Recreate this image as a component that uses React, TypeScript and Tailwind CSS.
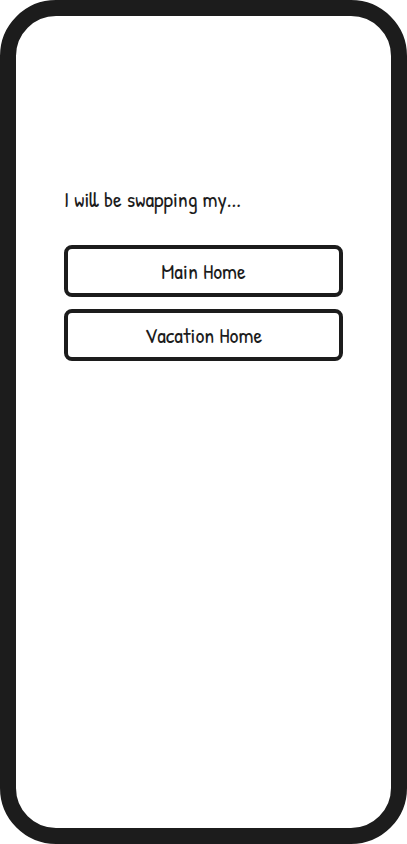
const homeTypes = ["Main Home", "Vacation Home"];

export default function App() {
  return (
    <div className="min-h-screen bg-white flex">
      <main className="flex-1 rounded-[56px] border-16 border-[#1c1c1c] bg-white px-12 pt-[167px] pb-12 text-[22px] leading-8 text-[#1c1c1c] font-['Patrick_Hand','Lato',sans-serif]">
        <h1 id="home-type">I will be swapping my...</h1>
        <div role="group" aria-labelledby="home-type" className="mt-[30px] flex flex-col gap-3">
          {homeTypes.map((label) => (
            <button
              key={label}
              type="button"
              className="h-13 w-full cursor-pointer rounded-lg border-4 border-[#1c1c1c] bg-white px-4"
            >
              {label}
            </button>
          ))}
        </div>
      </main>
    </div>
  );
}
